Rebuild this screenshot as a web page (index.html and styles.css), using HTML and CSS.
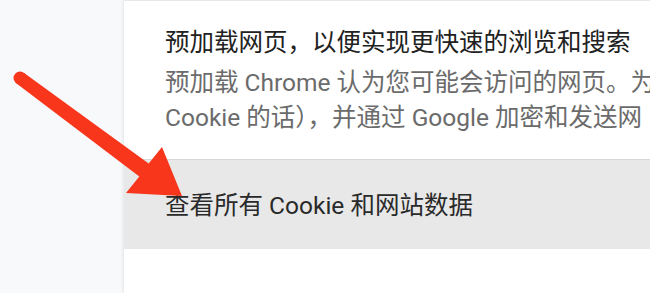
FILE: index.html
```html
<!DOCTYPE html>
<html lang="zh-CN">
<head>
<meta charset="utf-8">
<title>Cookie 设置</title>
<link rel="stylesheet" href="styles.css">
</head>
<body>
<div class="page">
  <div class="side"></div>
  <main class="card">
    <section class="setting">
      <div class="title">预加载网页，以便实现更快速的浏览和搜索</div>
      <div class="desc">预加载 Chrome 认为您可能会访问的网页。为<br>Cookie 的话），并通过 Google 加密和发送网</div>
    </section>
    <div class="row">查看所有 Cookie 和网站数据</div>
  </main>
</div>
<svg class="arrow" width="650" height="293" viewBox="0 0 650 293" aria-hidden="true">
  <circle cx="20" cy="78" r="6.5" fill="#f8361c"/>
  <polygon fill="#f8361c" points="23.8,72.7 148.7,163.5 162,147 182,196 126,193 139.3,176.5 16.2,83.3"/>
</svg>
</body>
</html>
```

FILE: styles.css
```css
html, body {
  margin: 0;
  padding: 0;
  width: 650px;
  height: 293px;
  overflow: hidden;
  background: #f8f9fa;
  font-family: Roboto, "Noto Sans CJK SC", sans-serif;
}

.page {
  display: flex;
  height: 293px;
}

.side {
  flex: 0 0 124px;
}

.card {
  flex: 1 0 auto;
  background: #ffffff;
  box-shadow: 0 0 4px rgba(0, 0, 0, 0.14);
  border-top: 1px solid #e8e8e8;
  overflow: hidden;
}

.setting {
  padding: 22px 0 0 41px;
  white-space: nowrap;
}

.title {
  font-size: 24.5px;
  line-height: 40px;
  color: #212121;
}

.desc {
  margin-top: 2px;
  font-size: 24.5px;
  line-height: 35px;
  color: #6b6b6b;
}

.row {
  margin-top: 24px;
  border-top: 1px solid #d8d8d8;
  background: #e8e8e8;
  height: 89px;
  line-height: 91px;
  padding-left: 41px;
  font-size: 24.5px;
  color: #2a2a2a;
  white-space: nowrap;
}

.arrow {
  position: absolute;
  left: 0;
  top: 0;
}
```
